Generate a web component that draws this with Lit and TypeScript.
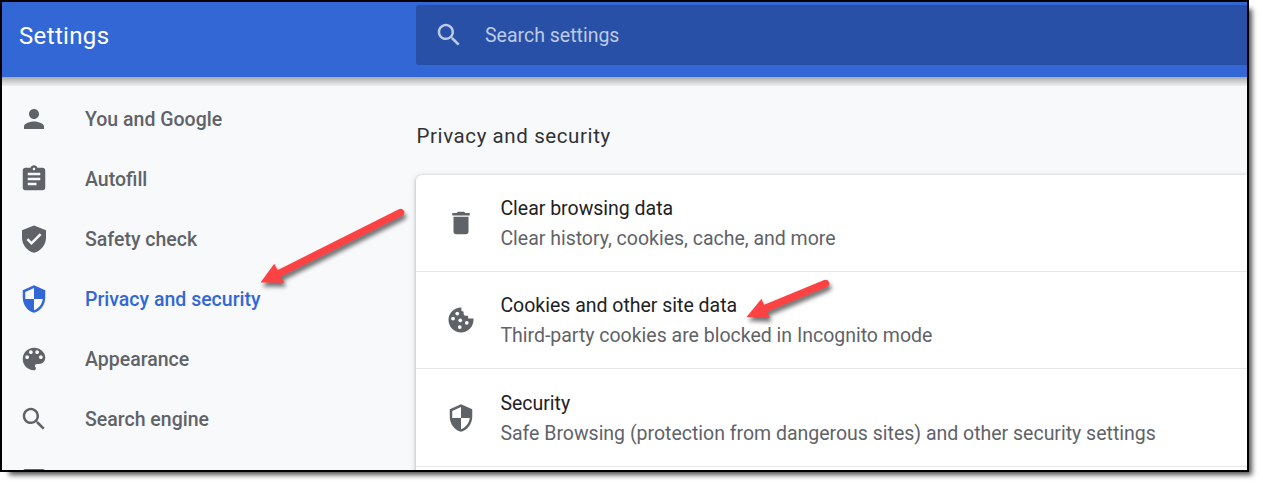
import { LitElement, html, css, svg } from "lit";
import { customElement, property } from "lit/decorators.js";

const ICONS: Record<string, string> = {
  person: "M12 12c2.21 0 4-1.79 4-4s-1.79-4-4-4-4 1.79-4 4 1.79 4 4 4zm0 2c-2.67 0-8 1.34-8 4v2h16v-2c0-2.66-5.33-4-8-4z",
  assignment: "M19 3h-4.18C14.4 1.84 13.3 1 12 1c-1.3 0-2.4.84-2.82 2H5c-1.1 0-2 .9-2 2v14c0 1.1.9 2 2 2h14c1.1 0 2-.9 2-2V5c0-1.1-.9-2-2-2zm-7 0c.55 0 1 .45 1 1s-.45 1-1 1-1-.45-1-1 .45-1 1-1zm2 14H7v-2h7v2zm3-4H7v-2h10v2zm0-4H7V7h10v2z",
  verified: "M12 1.2L2.4 5v6c0 5.6 4 10.6 9.6 12 5.6-1.4 9.6-6.4 9.6-12V5L12 1.2zm-2 15.6l-4-4 1.41-1.41L10 13.97l6.59-6.59L18 8.8l-8 8z",
  security: "M12 1L3 5v6c0 5.55 3.84 10.74 9 12 5.16-1.26 9-6.45 9-12V5l-9-4zm0 10.99h7c-.53 4.12-3.28 7.79-7 8.94V12H5V6.3l7-3.11v8.8z",
  palette: "M12 3c-4.97 0-9 4.03-9 9s4.03 9 9 9c.83 0 1.5-.67 1.5-1.5 0-.39-.15-.74-.39-1.01-.23-.26-.38-.61-.38-.99 0-.83.67-1.5 1.5-1.5H16c2.76 0 5-2.24 5-5 0-4.42-4.03-8-9-8zm-5.5 9c-.83 0-1.5-.67-1.5-1.5S5.67 9 6.5 9 8 9.67 8 10.5 7.33 12 6.5 12zm3-4C8.67 8 8 7.33 8 6.5S8.67 5 9.5 5s1.5.67 1.5 1.5S10.33 8 9.5 8zm5 0c-.83 0-1.5-.67-1.5-1.5S13.67 5 14.5 5s1.5.67 1.5 1.5S15.33 8 14.5 8zm3 4c-.83 0-1.5-.67-1.5-1.5S16.67 9 17.5 9s1.5.67 1.5 1.5-.67 1.5-1.5 1.5z",
  search: "M15.5 14h-.79l-.28-.27C15.41 12.59 16 11.11 16 9.5 16 5.91 13.09 3 9.5 3S3 5.91 3 9.5 5.91 16 9.5 16c1.61 0 3.09-.59 4.23-1.57l.27.28v.79l5 4.99L20.49 19l-4.99-5zm-6 0C7.01 14 5 11.99 5 9.5S7.01 5 9.5 5 14 7.01 14 9.5 11.99 14 9.5 14z",
  browser: "M19 4H5c-1.11 0-2 .9-2 2v12c0 1.1.89 2 2 2h14c1.1 0 2-.9 2-2V6c0-1.1-.89-2-2-2zm0 14H5V8h14v10z",
  trash: "M6 19c0 1.1.9 2 2 2h8c1.1 0 2-.9 2-2V7H6v12zM19 4h-3.5l-1-1h-5l-1 1H5v2h14V4z",
};

const COOKIE_BODY = "M22 10.8h-3.500c-.5 0-.8-.4-.8-.9V9.300c0-.5-.4-.8-.9-.8h-1.200c-.9 0-1.500-.7-1.500-1.500V5.800c0-.5-.4-.8-.9-.8-.6 0-.9-.4-.9-.9V2C6.500 1.900 2 6.400 2 12c0 5.520 4.480 10 10 10s10-4.480 10-10z";
const COOKIE_CHIPS = [[9, 6.8], [5.6, 10.8], [11.4, 12.2], [16.6, 14.2], [11, 17.6]];

@customElement("md-icon")
export class MdIcon extends LitElement {
  @property() name = "";
  static styles = css`
    :host { display: block; width: 30px; height: 30px; flex: none; }
    svg { display: block; width: 30px; height: 30px; fill: currentColor; }
    .chip { fill: #fff; }
  `;
  render() {
    if (this.name === "cookie") {
      return html`<svg viewBox="0 0 24 24"><path d=${COOKIE_BODY}></path>
        ${COOKIE_CHIPS.map(([x, y]) => svg`<circle class="chip" cx=${x} cy=${y} r="1.5"></circle>`)}</svg>`;
    }
    return html`<svg viewBox="0 0 24 24"><path d=${ICONS[this.name]}></path></svg>`;
  }
}

const NAV = [
  ["person", "You and Google"],
  ["assignment", "Autofill"],
  ["verified", "Safety check"],
  ["security", "Privacy and security"],
  ["palette", "Appearance"],
  ["search", "Search engine"],
  ["browser", ""],
];

const ROWS = [
  ["trash", "Clear browsing data", "Clear history, cookies, cache, and more"],
  ["cookie", "Cookies and other site data", "Third-party cookies are blocked in Incognito mode"],
  ["security", "Security", "Safe Browsing (protection from dangerous sites) and other security settings"],
];

@customElement("app-root")
export class AppRoot extends LitElement {
  static styles = css`
    :host {
      display: block; position: relative; width: 1263px; height: 486px; overflow: hidden;
      background: #fff; font-family: Roboto, "Liberation Sans", sans-serif; font-size: 19.5px;
    }
    .window {
      box-sizing: border-box; width: 1249px; height: 472px; border: 2px solid #000;
      background: #f8f9fb; display: flex; flex-direction: column; overflow: hidden;
    }
    .frame { width: 1249px; height: 472px; box-shadow: 6px 6px 5px -3px rgba(0, 0, 0, .68); }
    .header {
      flex: none; height: 75px; background: #3367d6; display: grid; grid-template-columns: 414px 1fr;
      position: relative;
    }
    .header::after {
      content: ""; position: absolute; left: 0; right: 0; top: 100%; height: 9px;
      background: linear-gradient(#a6a6a7, #c6c7c8 40%, #eeeff0);
    }
    .brand { padding: 17px 0 0 17px; font-size: 24px; line-height: 34px; letter-spacing: .35px; color: #fff; }
    .search {
      box-sizing: border-box; height: 60px; margin-top: 3px; padding-left: 18px; border-radius: 3px 0 0 3px;
      background: #2850a7; color: #bdcae6; display: flex; align-items: center; gap: 21px;
    }
    .body { flex: 1; min-height: 0; display: grid; grid-template-columns: 414px 1fr; }
    .nav { padding-top: 12px; }
    .item {
      height: 60px; padding-left: 17px; display: flex; align-items: center; gap: 36px;
      color: #5f6368; font-weight: 500;
    }
    .active { color: #3367d6; }
    .title { margin: 0; padding: 44px 0 0 .5px; font-size: 20.5px; line-height: 30px; font-weight: 400; letter-spacing: .6px; color: #303236; }
    .card {
      margin-top: 24px; height: 330px; background: #fff; border-radius: 6px 0 0 0;
      box-shadow: 0 1px 3px rgba(60, 64, 67, .3), 0 1px 5px 1px rgba(60, 64, 67, .15);
    }
    .row {
      box-sizing: border-box; height: 97px; padding-left: 30px; border-bottom: 1px solid #e8e8e8;
      display: flex; align-items: center; gap: 24.4px; color: #5f6368; line-height: 30px; white-space: nowrap;
    }
    .row:last-child { height: 98px; padding-top: 1px; }
    .text { padding-top: 1px; letter-spacing: -.008px; }
    .name { color: #202124; }
    .arrows { position: absolute; left: 0; top: 0; filter: drop-shadow(2px 4px 2px rgba(0, 0, 0, .55)); }
    .head { fill: #fd4243; }
    .shaft { stroke: #fd4243; stroke-width: 7.4; stroke-linecap: round; }
  `;
  render() {
    return html`
      <div class="frame"><div class="window">
        <div class="header">
          <div class="brand">Settings</div>
          <div class="search"><md-icon name="search"></md-icon><span>Search settings</span></div>
        </div>
        <div class="body">
          <div class="nav">
            ${NAV.map(([icon, label], i) => html`<div class="item ${i === 3 ? "active" : ""}">
              <md-icon name=${icon}></md-icon><span>${label}</span></div>`)}
          </div>
          <div>
            <h2 class="title">Privacy and security</h2>
            <div class="card">
              ${ROWS.map(([icon, name, sub]) => html`<div class="row">
                <md-icon name=${icon}></md-icon>
                <div class="text"><div class="name">${name}</div><div>${sub}</div></div>
              </div>`)}
            </div>
          </div>
        </div>
      </div></div>
      <svg class="arrows" width="1263" height="486" viewBox="0 0 1263 486">
        <line class="shaft" x1="400.500" y1="212.500" x2="278" y2="274"></line>
        <path class="head" d="M260.500 282.500L274.300 263.800L284.200 282.700Z"></path>
        <line class="shaft" x1="825.500" y1="283.500" x2="765" y2="308.500"></line>
        <path class="head" d="M746.500 317L761.500 298.800L769.800 318Z"></path>
      </svg>
    `;
  }
}
